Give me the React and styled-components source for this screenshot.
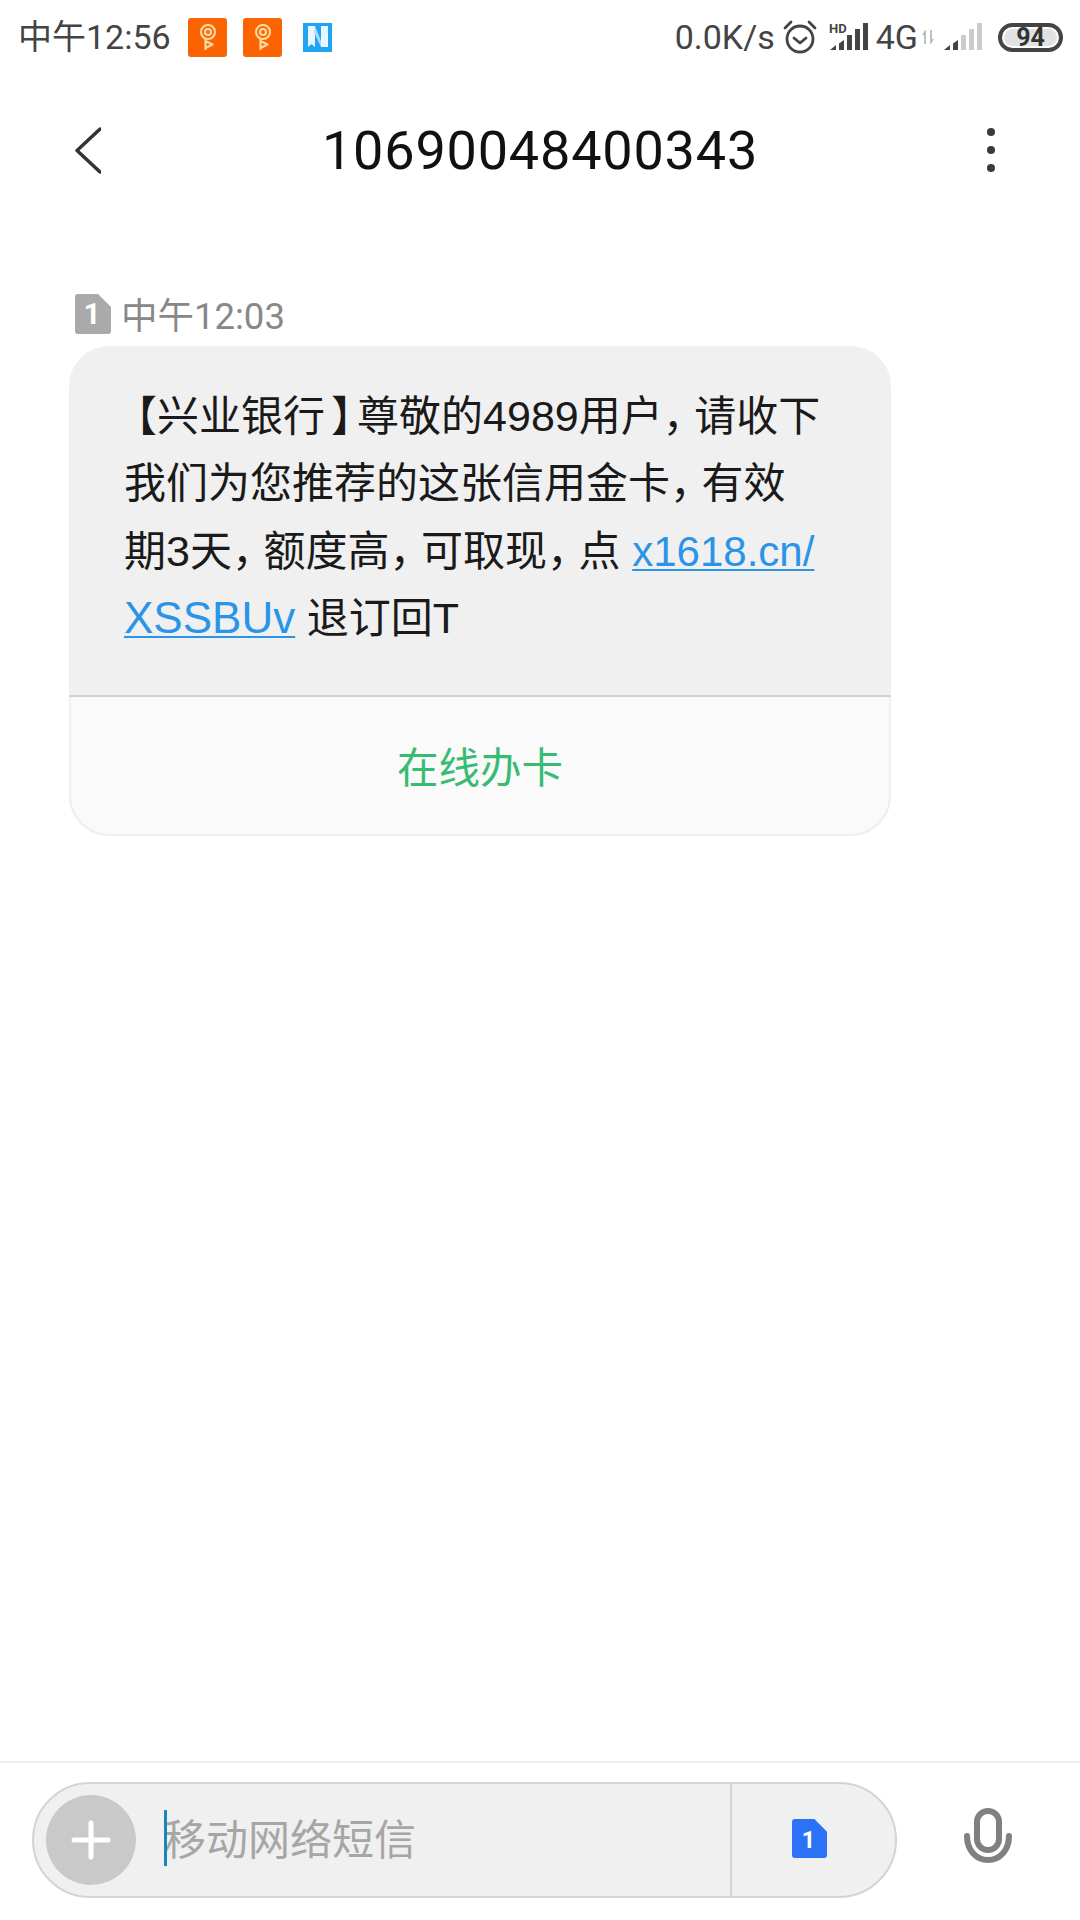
import React from 'react';
import styled, { createGlobalStyle } from 'styled-components';

const Global = createGlobalStyle`
  html, body { margin: 0; padding: 0; background: #fff; }
  * { box-sizing: border-box; }
  body { font-family: Roboto, "Noto Sans CJK SC", sans-serif; }
`;

const Page = styled.div`
  width: 1080px; height: 1920px; display: flex; flex-direction: column; background: #fff; overflow: hidden;
`;
const StatusBar = styled.div`
  height: 74px; display: flex; align-items: center; justify-content: space-between;
  padding: 0 17px 0 18px; color: #444;
`;
const StatusGroup = styled.div`display: flex; align-items: center;`;
const Clock = styled.span`font-size: 34px; line-height: 40px; width: 170px; white-space: nowrap;`;
const AppIcon = styled.div`
  width: 39px; height: 39px; border-radius: 3px; background: #fb6400; margin-right: 16px;
  display: flex; align-items: center; justify-content: center;
`;
const NewsIcon = styled.div`
  width: 29px; height: 29px; background: #1fa5f4; margin-left: 5px;
  display: flex; align-items: center; justify-content: center;
`;
const Speed = styled.span`font-size: 34px; line-height: 40px; white-space: nowrap; margin-right: 8px;`;
const Spacer = styled.span`width: ${(p) => p.$w}px; flex: none;`;
const NetLabel = styled.span`font-size: 34px; line-height: 40px; margin: 0 4px 0 5px;`;
const Battery = styled.div`
  width: 65px; height: 29px; margin-left: 13px; border: 4px solid #444; border-radius: 15px; padding: 2px;
  display: flex;
`;
const BatteryFill = styled.div`
  flex: 1; background: #e2e2e2; border-radius: 9px; display: flex; align-items: center; justify-content: center;
  font-size: 25px; font-weight: 700; color: #333; line-height: 17px;
`;

const Header = styled.div`
  height: 152px; display: grid; grid-template-columns: 1fr auto 1fr; align-items: center; padding: 0 75px;
`;
const Title = styled.h1`
  margin: 0; font-size: 54px; letter-spacing: 0.8px; font-weight: 400; color: #111; line-height: 60px;
  position: relative; top: 1px;
`;
const More = styled.div`
  justify-self: end; display: flex; flex-direction: column; gap: 10px; margin-right: 10px;
`;
const Dot = styled.span`width: 8px; height: 8px; border-radius: 50%; background: #3a3a3a;`;

const Thread = styled.div`flex: 1; padding: 68px 0 0 69px; display: flex; flex-direction: column;`;
const Meta = styled.div`
  display: flex; align-items: flex-start; gap: 10px; padding-left: 6px; height: 52px; color: #888;
  font-size: 36.5px; line-height: 46px;
`;
const Bubble = styled.div`
  width: 822px; border-radius: 40px; overflow: hidden; background: #f0f0f0;
`;
const Body = styled.div`
  height: 351px; padding: 37px 0 0 55px; font-family: "Liberation Sans", "Noto Sans CJK SC", sans-serif;
  font-size: 42px; color: #1a1a1a;
  border-bottom: 2px solid #d2d2d2;
`;
const Line = styled.div`white-space: nowrap; height: 67.4px; line-height: 67.4px;`;
const Latin = styled.span`font-size: 43px; line-height: 0;`;
const Opening = styled.span`margin-left: -9px;`;
const Closing = styled.span`letter-spacing: -16px; padding-left: 6px; line-height: 0;`;
const Comma = styled.span`letter-spacing: -10.5px; line-height: 0;`;
const Linked = styled.a`
  color: #2a94e8; font-size: ${(p) => p.$size}px; line-height: 0; text-decoration: underline;
  text-underline-offset: 3px; text-decoration-thickness: 2px;
`;
const Action = styled.div`
  height: 139px; background: #fafafa; border: 2px solid #efefef; border-top: none; border-radius: 0 0 40px 40px;
  display: flex; align-items: center; justify-content: center; color: #38bb72; font-size: 41.5px;
  padding-bottom: 2px;
`;

const Composer = styled.div`
  height: 159px; border-top: 2px solid #ececec; padding: 19px 0 0 32px; display: flex; align-items: flex-start;
`;
const Pill = styled.div`
  width: 865px; height: 116px; border-radius: 58px; background: #f0f0f0; border: 2px solid #d4d4d4;
  display: flex; align-items: center; padding-left: 12px;
`;
const PlusButton = styled.div`
  width: 90px; height: 90px; border-radius: 50%; background: #c9c9c9; flex: none;
  display: flex; align-items: center; justify-content: center;
`;
const Field = styled.div`
  flex: 1; display: flex; align-items: center; padding: 0 0 8px 28px; height: 100%;
  color: #a6a6a6; font-size: 42px; position: relative;
`;
const Caret = styled.span`
  position: absolute; left: 28px; top: 26px; width: 3px; height: 56px; background: #1b84b8;
`;
const SimSlot = styled.div`
  width: 165px; height: 100%; border-left: 2px solid #d4d4d4; flex: none; display: flex; align-items: center;
  justify-content: center; padding: 0 8px 3px 0;
`;
const MicButton = styled.div`
  flex: 1; display: flex; justify-content: center; padding: 26px 2px 0 0;
`;

const KeyGlyph = () => (
  <svg width="18" height="27" viewBox="0 0 18 27" fill="none" stroke="#ffd9a0" strokeWidth="2.2" strokeLinejoin="round">
    <circle cx="9" cy="8" r="7" />
    <circle cx="9" cy="8" r="3" />
    <path d="M6.500 14v12M6.500 17l7 3.500-7 3.500" />
  </svg>
);
const SimGlyph = ({ w, h, color, digit, fs }) => (
  <svg width={w} height={h} viewBox="0 0 36 40">
    <path d="M3 0h20l13 13v24a3 3 0 0 1-3 3H3a3 3 0 0 1-3-3V3a3 3 0 0 1 3-3z" fill={color} />
    <text x="17" y="30" textAnchor="middle" fontFamily="Roboto, sans-serif" fontWeight="700" fontSize={fs} fill="#fff">{digit}</text>
  </svg>
);
const Bars = ({ light, hd }) => (
  <svg width="42" height="30" viewBox="0 0 42 30">
    {hd && <text x="0" y="11" fontFamily="Roboto, sans-serif" fontWeight="700" fontSize="13" fill="#444">HD</text>}
    <path d="M1 28l6-5v5z" fill="#444" />
    <path d="M10 21.500l5-3.500v10h-5z" fill="#444" />
    <rect x="18" y="13" width="5" height="15" fill={light ? '#ccc' : '#444'} />
    <rect x="26" y="7" width="5" height="21" fill={light ? '#ccc' : '#444'} />
    <rect x="34" y="1" width="5" height="27" fill={light ? '#ccc' : '#444'} />
  </svg>
);

export default function App() {
  return (
    <Page>
      <Global />
      <StatusBar>
        <StatusGroup>
          <Clock>中午12:56</Clock>
          <AppIcon><KeyGlyph /></AppIcon>
          <AppIcon><KeyGlyph /></AppIcon>
          <NewsIcon>
            <svg width="23" height="24" viewBox="0 0 23 24">
              <path d="M2 1h7v21l-3.500-3L2 22z" fill="#eaf6fe" />
              <path d="M9 1l6 15v6L8 7z" fill="#a9dcfb" />
              <path d="M15 1h7v21h-7z" fill="#eaf6fe" />
            </svg>
          </NewsIcon>
        </StatusGroup>
        <StatusGroup>
          <Speed>0.0K/s</Speed>
          <svg width="34" height="34" viewBox="0 0 34 34" fill="none" stroke="#444" strokeWidth="2.8" strokeLinecap="round" strokeLinejoin="round">
            <circle cx="17" cy="19" r="13" />
            <path d="M11 18l6 5 6-5M2 8l6-6M32 8l-6-6" />
          </svg>
          <Spacer $w={12} />
          <Bars hd />
          <NetLabel>4G</NetLabel>
          <svg width="12" height="14" viewBox="0 0 12 14" fill="none" stroke="#bbb" strokeWidth="1.8">
            <path d="M3 14V2L1 5M9 0v12l2-3" />
          </svg>
          <Spacer $w={9} />
          <Bars light />
          <Battery><BatteryFill>94</BatteryFill></Battery>
        </StatusGroup>
      </StatusBar>
      <Header>
        <svg width="26" height="47" viewBox="0 0 26 47" fill="none" stroke="#333" strokeWidth="3.4" strokeLinecap="round" strokeLinejoin="round">
          <path d="M25 2L2 23.500 25 45" />
        </svg>
        <Title>10690048400343</Title>
        <More><Dot /><Dot /><Dot /></More>
      </Header>
      <Thread>
        <Meta>
          <SimGlyph w={36} h={40} color="#aaa" digit="1" fs={30} />
          <span>中午12:03</span>
        </Meta>
        <Bubble>
          <Body>
            <Line><Opening>【</Opening>兴业银行<Closing>】</Closing>尊敬的<Latin>4989</Latin>用户<Comma>，</Comma>请收下</Line>
            <Line>我们为您推荐的这张信用金卡<Comma>，</Comma>有效</Line>
            <Line>期<Latin>3</Latin>天<Comma>，</Comma>额度高<Comma>，</Comma>可取现<Comma>，</Comma>点 <Linked $size={42}>x1618.cn/</Linked></Line>
            <Line><Linked $size={44}>XSSBUv</Linked> 退订回<Latin>T</Latin></Line>
          </Body>
          <Action>在线办卡</Action>
        </Bubble>
      </Thread>
      <Composer>
        <Pill>
          <PlusButton>
            <svg width="40" height="40" viewBox="0 0 40 40" stroke="#fff" strokeWidth="5" strokeLinecap="round">
              <path d="M20 3v34M3 20h34" />
            </svg>
          </PlusButton>
          <Field>
            <Caret />
            移动网络短信
          </Field>
          <SimSlot>
            <SimGlyph w={35} h={39} color="#2b72f6" digit="1" fs={24} />
          </SimSlot>
        </Pill>
        <MicButton>
          <svg width="48" height="55" viewBox="0 0 48 55" fill="none" stroke="#808080" strokeWidth="6" strokeLinecap="round">
            <rect x="13" y="3" width="22" height="39" rx="11" />
            <path d="M3 28c0 14 9 24 21 24s21-10 21-24" />
          </svg>
        </MicButton>
      </Composer>
    </Page>
  );
}
